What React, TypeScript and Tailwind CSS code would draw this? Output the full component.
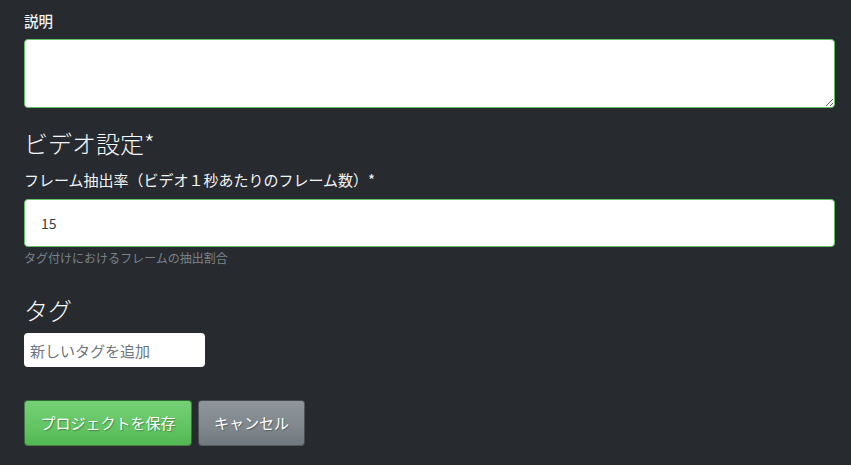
export default function App() {
  const font = "font-['Noto_Sans_CJK_JP','Noto_Sans',sans-serif]";
  return (
    <div className={`min-h-[465px] w-full bg-[#272b30] px-[24px] pr-[16px] ${font}`}>
      <div className="flex flex-col pt-[11px]">
        <label className="text-[14.5px] leading-[20px] font-medium text-[#f3f4f5]">説明</label>
        <textarea className="mt-[8px] h-[69px] w-full rounded-[4px] border border-[#62c462] bg-white px-3 py-2 text-[14px] text-[#272b30] outline-none" />

        <h4 className="mt-[20px] text-[24px] leading-[30px] font-light text-[#f8f9fa]">ビデオ設定*</h4>
        <label className="mt-[12px] text-[15px] leading-[20px] text-[#f3f4f5]">
          フレーム抽出率（ビデオ１秒あたりのフレーム数）*
        </label>
        <input
          defaultValue="15"
          className="mt-[9px] h-[48px] w-full rounded-[4px] border border-[#62c462] bg-white px-[16px] text-[14px] text-[#3a3f44] outline-none"
        />
        <small className="mt-[3px] text-[12px] leading-[16px] text-[#7a8288]">
          タグ付けにおけるフレームの抽出割合
        </small>

        <h4 className="mt-[29px] text-[24px] leading-[30px] font-light text-[#f8f9fa]">タグ</h4>
        <input
          placeholder="新しいタグを追加"
          className="mt-[8px] h-[34px] w-[181px] rounded-[4px] bg-white px-[6px] text-[15px] text-[#3a3f44] outline-none placeholder:text-[#6c757d]"
        />

        <div className="mt-[33px] flex gap-[6px]">
          <button className="h-[46px] w-[168px] rounded-[4px] border border-black/40 bg-[linear-gradient(#76d076,#62c462_60%,#52b852)] text-[15px] text-white [text-shadow:1px_1px_1px_rgba(0,0,0,0.3)]">
            プロジェクトを保存
          </button>
          <button className="h-[46px] w-[107px] rounded-[4px] border border-black/40 bg-[linear-gradient(#8f969b,#7f878c_60%,#72797e)] text-[15px] text-white [text-shadow:1px_1px_1px_rgba(0,0,0,0.3)]">
            キャンセル
          </button>
        </div>
      </div>
    </div>
  );
}
